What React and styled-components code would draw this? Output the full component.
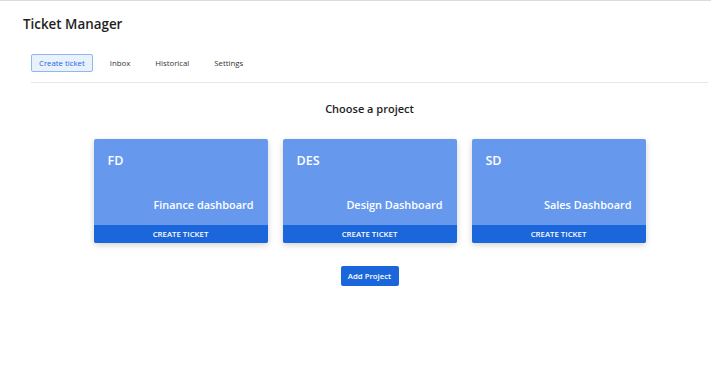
import React from "react";
import styled, { createGlobalStyle } from "styled-components";

const Global = createGlobalStyle`
  html, body { margin: 0; padding: 0; background: #fff; }
  body { font-family: "Open Sans", "Noto Sans", sans-serif; color: #212529; }
  * { box-sizing: border-box; }
`;

const Page = styled.div`
  border-top: 1px solid #dcdcdc;
  min-height: 374px;
`;

const Title = styled.h1`
  margin: 0;
  padding: 13px 0 0 23px;
  font-size: 13.4px;
  font-weight: 600;
  line-height: 20px;
  color: #1e1e1e;
`;

const Content = styled.div`
  margin: 20px 3px 0 31px;
`;

const Tabs = styled.nav`
  display: flex;
  align-items: center;
  padding-bottom: 10px;
  border-bottom: 1px solid #e6e6e6;
`;

const Tab = styled.button`
  font-family: inherit;
  font-size: 7.8px;
  font-weight: 500;
  height: 18px;
  padding: 0 ${(p) => (p.$active ? "7px" : "11.5px")};
  margin-right: ${(p) => (p.$active ? "4.5px" : "0")};
  border-radius: 2px;
  border: 1px solid ${(p) => (p.$active ? "#8fb8f2" : "transparent")};
  background: ${(p) => (p.$active ? "#e9f1fd" : "transparent")};
  color: ${(p) => (p.$active ? "#1a66da" : "#333")};
  cursor: pointer;
`;

const Heading = styled.h2`
  margin: 17px 0 0;
  text-align: center;
  font-size: 11px;
  font-weight: 600;
  line-height: 18px;
  color: #1e1e1e;
`;

const Cards = styled.div`
  display: flex;
  justify-content: center;
  gap: 15px;
  margin-top: 21px;
`;

const Card = styled.div`
  width: 174px;
  height: 104px;
  display: flex;
  flex-direction: column;
  background: #6699ee;
  border-radius: 2px;
  box-shadow: 0 2px 6px rgba(0, 0, 0, 0.18);
  overflow: hidden;
  color: #fff;
`;

const CardBody = styled.div`
  flex: 1;
  display: flex;
  flex-direction: column;
  justify-content: space-between;
  padding: 13px 14px 12px 14px;
`;

const Code = styled.div`
  font-size: 12.5px;
  font-weight: 600;
  line-height: 18px;
`;

const Name = styled.div`
  text-align: right;
  font-size: 10.9px;
  font-weight: 600;
  line-height: 16px;
`;

const CardFooter = styled.button`
  height: 18px;
  border: none;
  background: #1a66da;
  color: #fff;
  font-family: inherit;
  font-size: 7.8px;
  font-weight: 600;
  text-transform: uppercase;
  padding: 0;
  cursor: pointer;
`;

const Actions = styled.div`
  display: flex;
  justify-content: center;
  margin-top: 23px;
`;

const PrimaryButton = styled.button`
  height: 20px;
  width: 58px;
  padding: 0;
  border: none;
  border-radius: 2px;
  background: #1a66da;
  color: #fff;
  font-family: inherit;
  font-size: 7.8px;
  font-weight: 600;
  cursor: pointer;
`;

const projects = [
  { code: "FD", name: "Finance dashboard" },
  { code: "DES", name: "Design Dashboard" },
  { code: "SD", name: "Sales Dashboard" },
];

export default function App() {
  return (
    <>
      <Global />
      <Page>
        <Title>Ticket Manager</Title>
        <Content>
          <Tabs>
            <Tab $active>Create ticket</Tab>
            <Tab>Inbox</Tab>
            <Tab>Historical</Tab>
            <Tab>Settings</Tab>
          </Tabs>
          <Heading>Choose a project</Heading>
          <Cards>
            {projects.map((p) => (
              <Card key={p.code}>
                <CardBody>
                  <Code>{p.code}</Code>
                  <Name>{p.name}</Name>
                </CardBody>
                <CardFooter>Create ticket</CardFooter>
              </Card>
            ))}
          </Cards>
          <Actions>
            <PrimaryButton>Add Project</PrimaryButton>
          </Actions>
        </Content>
      </Page>
    </>
  );
}
